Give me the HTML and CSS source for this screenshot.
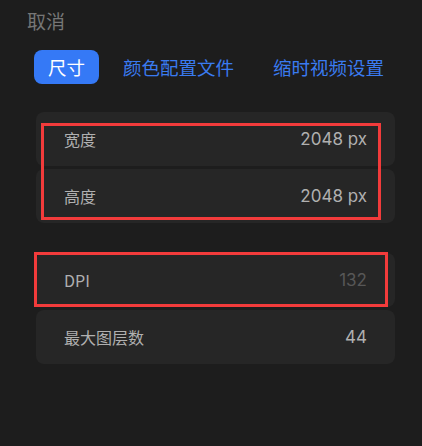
FILE: index.html
```html
<!DOCTYPE html>
<html lang="zh-CN">
<head>
    <meta charset="UTF-8">
    <meta name="viewport" content="width=device-width, initial-scale=1.0">
    <link rel="stylesheet" href="styles.css">
</head>
<body>
    <div class="panel">
        <div class="cancel">取消</div>

        <div class="tabs">
            <button class="tab active">尺寸</button>
            <button class="tab">颜色配置文件</button>
            <button class="tab">缩时视频设置</button>
        </div>

        <div class="group">
            <div class="row">
                <span class="label">宽度</span>
                <span class="value">2048 px</span>
            </div>
            <div class="row">
                <span class="label">高度</span>
                <span class="value">2048 px</span>
            </div>
            <!-- marker around width/height -->
            <div class="mark mark-size"></div>
        </div>

        <div class="group">
            <div class="row">
                <span class="label">DPI</span>
                <span class="value muted">132</span>
            </div>
            <div class="row">
                <span class="label">最大图层数</span>
                <span class="value">44</span>
            </div>
            <div class="mark mark-dpi"></div>
        </div>
    </div>
</body>
</html>
```

FILE: styles.css
```css
body {
    margin: 0;
    height: 446px;
    background: #1d1d1d;
    font-family: "Inter", "Noto Sans CJK SC", sans-serif;
    color: #b4b4b4;
}

.panel {
    padding: 10px 27px 0 36px;
}

.cancel {
    margin-left: -9px;
    font-size: 19px;
    line-height: 26px;
    color: #767676;
}

.tabs {
    display: flex;
    align-items: center;
    gap: 39px;
    margin-top: 14px;
    margin-left: -2px;
}

.tab {
    border: none;
    background: none;
    font-family: "Noto Sans CJK SC", sans-serif;
    font-size: 18.5px;
    color: #3a7bf0;
    padding: 0;
    height: 34px;
    cursor: pointer;
}

.tab.active {
    width: 65px;
    background: #3579f6;
    color: #fff;
    border-radius: 8px;
    margin-right: -15px;
}

.group {
    position: relative;
    display: flex;
    flex-direction: column;
    gap: 3px;
    width: 359px;
    margin-top: 28px;
}

.group + .group {
    margin-top: 30px;
}

.row {
    display: flex;
    justify-content: space-between;
    align-items: center;
    height: 54px;
    padding: 0 28px 0 28px;
    background: #262626;
    border-radius: 8px;
}

.label {
    font-family: "Noto Sans CJK SC", sans-serif;
    font-size: 16px;
    color: #b0b0b0;
}

.value {
    font-size: 17px;
    color: #b0b0b0;
}

.value.muted {
    color: #575757;
}

.mark {
    position: absolute;
    border: 3px solid #f23b3b;
}

.mark-size {
    left: 5px;
    top: 11px;
    width: 334px;
    height: 91px;
}

.mark-dpi {
    left: -2px;
    top: -1px;
    width: 348px;
    height: 49px;
}
```
